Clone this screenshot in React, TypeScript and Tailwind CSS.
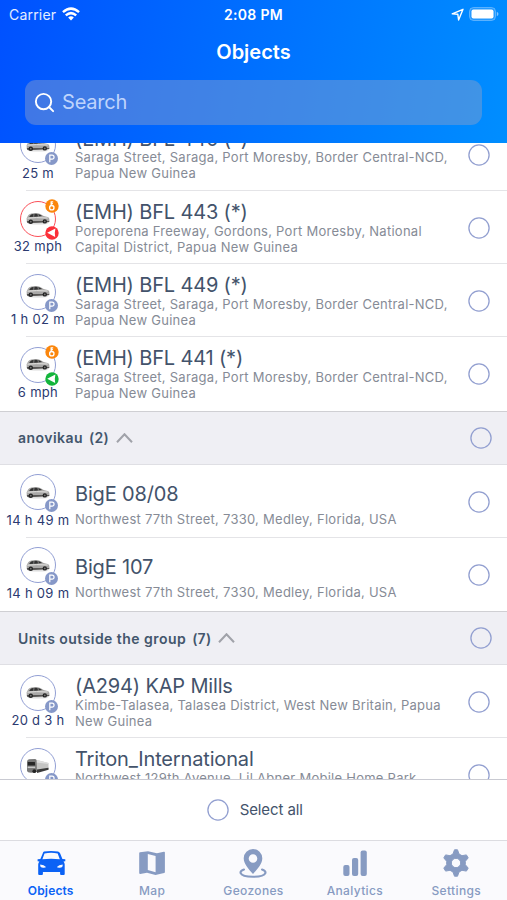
import { Search } from "lucide-react";
import type { ReactNode } from "react";

type Badge = "parked" | "moving" | "speeding";

type Unit = {
    id: number;
    name: string;
    address: string[];
    status: string;
    badge: Badge;
    ignition?: boolean;
    truck?: boolean;
};

type Group = {
    id: number;
    title?: string;
    count?: number;
    units: Unit[];
};

const GROUPS: Group[] = [
    {
        id: 1,
        units: [
            {
                id: 1,
                name: "(EMH) BFL 440 (*)",
                address: ["Saraga Street, Saraga, Port Moresby, Border Central-NCD,", "Papua New Guinea"],
                status: "25 m",
                badge: "parked",
            },
            {
                id: 2,
                name: "(EMH) BFL 443 (*)",
                address: ["Poreporena Freeway, Gordons, Port Moresby, National", "Capital District, Papua New Guinea"],
                status: "32 mph",
                badge: "speeding",
                ignition: true,
            },
            {
                id: 3,
                name: "(EMH) BFL 449 (*)",
                address: ["Saraga Street, Saraga, Port Moresby, Border Central-NCD,", "Papua New Guinea"],
                status: "1 h 02 m",
                badge: "parked",
            },
            {
                id: 4,
                name: "(EMH) BFL 441 (*)",
                address: ["Saraga Street, Saraga, Port Moresby, Border Central-NCD,", "Papua New Guinea"],
                status: "6 mph",
                badge: "moving",
                ignition: true,
            },
        ],
    },
    {
        id: 2,
        title: "anovikau",
        count: 2,
        units: [
            {
                id: 5,
                name: "BigE 08/08",
                address: ["Northwest 77th Street, 7330, Medley, Florida, USA"],
                status: "14 h 49 m",
                badge: "parked",
            },
            {
                id: 6,
                name: "BigE 107",
                address: ["Northwest 77th Street, 7330, Medley, Florida, USA"],
                status: "14 h 09 m",
                badge: "parked",
            },
        ],
    },
    {
        id: 3,
        title: "Units outside the group",
        count: 7,
        units: [
            {
                id: 7,
                name: "(A294) KAP Mills",
                address: ["Kimbe-Talasea, Talasea District, West New Britain, Papua", "New Guinea"],
                status: "20 d 3 h",
                badge: "parked",
            },
            {
                id: 8,
                name: "Triton_International",
                address: ["Northwest 129th Avenue, Lil Abner Mobile Home Park,"],
                status: "",
                badge: "parked",
                truck: true,
            },
        ],
    },
];

function Radio() {
    return (
        <svg className="shrink-0" width="22" height="22" viewBox="0 0 22 22">
            <circle cx="11" cy="11" r="10.1" fill="none" stroke="#929fd0" strokeWidth="1.3" />
        </svg>
    );
}

function CarIcon() {
    return (
        <svg width="24" height="13" viewBox="0 0 24 13">
            <ellipse cx="12" cy="11.8" rx="10.500" ry=".8" fill="#dcdcdc" />
            <path d="M.6 6.200 2.200 3.200Q3 1.900 5.200 1.400L9 1q3.200-.1 5.300 1l3.400 2 4 1q1.500.5 1.600 1.800l.2 2.400q-.1 1-1.400 1.200L3 11.300q-1.900 0-2.200-1.500Z" fill="#a9a8a7" />
            <path d="M3.400 4.500 4.600 3Q5.600 2.200 7.200 2L10 1.800q2 0 3.600.8l2.600 1.500-6.200.7-6.600.3Z" fill="#333" />
            <path d="M8 1.800 7.700 4.800M11.800 1.800l.7 2.600" stroke="#b5b5b5" strokeWidth=".6" />
            <path d="M1.500 6.200q8-1 20.200-.2" stroke="#e4e3e1" strokeWidth="1" fill="none" />
            <path d="M1 8.900h22.200v1.200L3 11.300q-1.800 0-2.100-1.500Z" fill="#565453" />
            <circle cx="4.800" cy="9.700" r="2.200" fill="#222" />
            <circle cx="4.800" cy="9.700" r=".9" fill="#777" />
            <circle cx="18.800" cy="9.400" r="2.200" fill="#222" />
            <circle cx="18.800" cy="9.400" r=".9" fill="#777" />
        </svg>
    );
}

function TruckIcon() {
    return (
        <svg width="24" height="16" viewBox="0 0 24 16">
            <path d="M9 1.500 22.500 5v6.500L11 14Z" fill="#c4c4c3" />
            <path d="M9 1.500 22.500 5l.2 1L10 4.500Z" fill="#dedede" />
            <path d="M11 11.500 22.500 9.800v2L11 15Z" fill="#3a3a3a" />
            <path d="M1 3.500Q1.200 1.500 3 1.300l6-.3q1.400 0 1.600 1.500L11 14l-6 .7q-3.600-.2-4-2Z" fill="#777" />
            <path d="M1.800 4h7l.4 3.600-7.400-.2Z" fill="#262626" />
            <path d="M1.600 8.600h7.600v1.500H1.600Z" fill="#c8c8c8" />
            <circle cx="8.300" cy="13.200" r="1.900" fill="#222" />
        </svg>
    );
}

function StatusBadge({ badge }: { badge: Badge }) {
    if (badge === "parked") {
        return (
            <svg className="absolute top-[24px] left-[24px]" width="13" height="13" viewBox="0 0 13 13">
                <circle cx="6.500" cy="6.500" r="6.500" fill="#8698c8" />
                <path d="M4.800 10.200V3.200h2.300a1.900 1.900 0 0 1 0 3.900H4.800" fill="none" stroke="#fff" strokeWidth="1.200" />
            </svg>
        );
    }
    return (
        <svg className="absolute top-[24px] left-[24px]" width="14" height="14" viewBox="0 0 14 14">
            <circle cx="7" cy="7" r="6.700" fill={badge === "moving" ? "#14b53c" : "#fb2f38"} />
            <path d="M2.200 6.800 10.400 2.600 9.800 7l.4 3.900Z" fill="#fff" />
        </svg>
    );
}

function IgnitionBadge() {
    return (
        <svg className="absolute -top-[3px] left-[24px]" width="14" height="14" viewBox="0 0 14 14">
            <circle cx="7" cy="7" r="6.700" fill="#fb860c" />
            <g fill="none" stroke="#fff" strokeWidth="1.300">
                <path d="M6.200 2.200v4.200M6.200 2.900h2M6.200 4.700h1.700" />
                <circle cx="6.800" cy="8.700" r="2.200" />
            </g>
        </svg>
    );
}

function UnitRow({ unit, last }: { unit: Unit; last: boolean }) {
    // The list is cut right below this row's first address line
    const single = unit.address.length === 1 && !unit.truck;
    return (
        <div className="relative flex h-[73.2px] shrink-0">
            <div className="flex w-[76px] shrink-0 flex-col items-center pt-[9.5px]">
                <div
                    className={`relative flex h-9 w-9 items-center justify-center rounded-full border-[1.5px] bg-white ${unit.badge === "speeding" ? "border-[#fb5058]" : "border-[#929fd4]"
                        }`}
                >
                    {unit.truck ? <TruckIcon /> : <CarIcon />}
                    {unit.ignition && <IgnitionBadge />}
                    <StatusBadge badge={unit.badge} />
                </div>
                <span className="mt-[1.5px] text-[13px] leading-4 tracking-[0.3px] whitespace-nowrap text-[#2b3a70]">
                    {unit.status}
                </span>
            </div>
            <div className={`min-w-0 flex-1 whitespace-nowrap ${single ? "pt-[17px]" : "pt-[9px]"}`}>
                <div className="-ml-px text-[20px] leading-6 tracking-[-0.16px] text-[#43536b]">{unit.name}</div>
                <div className={`-ml-px text-[13px] leading-4 tracking-[0.26px] text-[#868b96] ${single ? "mt-[5.5px]" : "-mt-[1.5px]"}`}>
                    {unit.address.map((line) => (
                        <div key={line}>{line}</div>
                    ))}
                </div>
            </div>
            <div className="flex items-center pt-[0.5px] pr-[17.5px]">
                <Radio />
            </div>
            {!last && <div className="absolute right-0 bottom-0 left-[26px] h-px bg-[#e4e4e7]" />}
        </div>
    );
}

function GroupHeader({ title, count }: { title: string; count?: number }) {
    return (
        <div className="flex h-[54px] shrink-0 items-center border-y border-t-[#cfcfd3] border-b-[#dfdfe4] bg-[#efeff4] pr-[15px] pl-[18px]">
            <span className="flex gap-[6px] text-[14px] font-semibold tracking-[0.46px] text-[#43566c]">
                <span>{title}</span>
                <span className="tracking-[0.2px]">({count})</span>
            </span>
            <svg className="ml-[7px]" width="17" height="10" viewBox="0 0 17 10">
                <path d="M1 9.200 8.500 1.200 16 9.200" fill="none" stroke="#a0a2a9" strokeWidth="2" />
            </svg>
            <div className="ml-auto">
                <Radio />
            </div>
        </div>
    );
}

function StatusBar() {
    return (
        <div className="grid h-7 grid-cols-3 items-center px-[9px] text-[14px]">
            <div className="flex items-center gap-[6px]">
                <span className="tracking-[0.2px] text-white/90">Carrier</span>
                <svg width="18" height="14" viewBox="0 0 19 14" fill="none" stroke="#fff" strokeWidth="2.600">
                    <path d="M1 5q8.500-7.300 17 0" />
                    <path d="M4 8.400q5.500-4.600 11 0" />
                    <path d="M6.500 10.700q3-2.400 6 0L9.500 13.800Z" fill="#fff" stroke="none" />
                </svg>
            </div>
            <span className="text-center font-semibold tracking-[0.3px]">2:08 PM</span>
            <div className="-mr-[1px] flex items-center justify-end gap-[5px]">
                <svg width="13" height="13" viewBox="0 0 13 13">
                    <path d="M1.200 5.800 12 1.300 7.600 12 6.800 6.200Z" fill="none" stroke="#fff" strokeWidth="1.400" strokeLinejoin="round" />
                </svg>
                <svg width="30" height="14" viewBox="0 0 30 14">
                    <rect x=".5" y=".5" width="26" height="13" rx="4" fill="#fff" fillOpacity=".15" stroke="#fff" strokeOpacity=".3" />
                    <rect x="2.500" y="2.500" width="22" height="9" rx="2" fill="#fff" />
                    <path d="M27.800 4.700q1.700.8 1.700 2.300t-1.700 2.300Z" fill="#fff" fillOpacity=".5" />
                </svg>
            </div>
        </div>
    );
}

function Tab({ label, active, children }: { label: string; active?: boolean; children: ReactNode }) {
    return (
        <div className={`flex flex-col items-center pt-[7px] ${active ? "text-[#0b62f5]" : "text-[#879bc2]"}`}>
            <svg width="32" height="32" viewBox="0 0 32 32" fill="currentColor">
                {children}
            </svg>
            <span className={`mt-[3px] text-[12px] leading-4 ${active ? "font-semibold tracking-[0.15px]" : "font-medium tracking-[0.35px]"}`}>
                {label}
            </span>
        </div>
    );
}

export default function App() {
    return (
        <div className="flex h-[900px] w-[507px] flex-col overflow-hidden bg-white font-['Inter','Liberation_Sans',sans-serif]">
            <header className="h-[142.5px] shrink-0 bg-[linear-gradient(100deg,#0051ff_0%,#0070ff_50%,#008eff_100%)] text-white">
                <StatusBar />
                <h1 className="pt-[10px] text-center text-[20px] leading-7 font-semibold">Objects</h1>
                <div className="mx-[25px] mt-[14px] flex h-[44.5px] items-center rounded-[11px] bg-[#8f9fc8]/45 pl-[8px]">
                    <Search className="h-[23px] w-[23px]" strokeWidth={2} />
                    <span className="ml-[6px] text-[20px] tracking-[-0.2px] text-[#bed4fc]">Search</span>
                </div>
            </header>

            {/* Objects list, scrolled part of a row down */}
            <main className="min-h-0 flex-1 overflow-hidden">
                <div className="-mt-[24.6px] flex flex-col">
                    {GROUPS.map((group) => (
                        <section key={group.id} className="flex flex-col">
                            {group.title && <GroupHeader title={group.title} count={group.count} />}
                            {group.units.map((unit, i) => (
                                <UnitRow key={unit.id} unit={unit} last={i === group.units.length - 1} />
                            ))}
                        </section>
                    ))}
                </div>
            </main>

            <div className="flex h-[61px] shrink-0 items-center justify-center border-t border-[#c9cad2] pl-[3px]">
                <Radio />
                <span className="ml-[10.5px] text-[15px] tracking-[-0.1px] text-[#43536b]">Select all</span>
            </div>

            {/* Bottom tabs */}
            <nav className="grid h-[60px] shrink-0 grid-cols-5 border-t border-[#dcdce1] bg-[#fafafd]">
                <Tab label="Objects" active>
                    <path fillRule="evenodd" d="M9 3.600Q16 2.200 23 3.600 24.500 4 25.200 5.600L27.400 11l2.900.2v2l-1.800.3q1.200 1.300 1.200 3V26q0 1-1 1h-2.600q-1 0-1-1v-1.900H7.900V26q0 1-1 1H4.200q-1 0-1-1v-9.500q0-1.700 1.200-3l-1.800-.3v-2L5.400 11l2.300-5.400Q8 4 9 3.600ZM9.500 5.400 7.400 11.300q8.700-1.200 17.400 0L22.700 5.400q-6.600-1.200-13.200 0ZM5.200 16.500q-.3 3.200 3 3.200 2.500.1 2.800-.6-2-2.600-5.800-2.600Zm22.500 0q-3.800 0-5.800 2.600.3.700 2.800.6 3.300 0 3-3.200Z" />
                </Tab>
                <Tab label="Map">
                    <path fillRule="evenodd" d="M4 4.200Q3.200 4.300 3.200 5.200V25q0 1 1 1l6.800-1.200 8.500 2.100 8.600-2q.8-.2.800-1V4.500q0-1-1-.8l-7 1.500L12 3.200ZM11.800 5.900l7.800 2v16.300l-7.800-2.100Z" />
                </Tab>
                <Tab label="Geozones">
                    <path fillRule="evenodd" d="M16 1a9.300 9.300 0 0 1 9.300 9.300C25.300 16 20 21.500 16 26 12 21.500 6.700 16 6.700 10.300A9.300 9.300 0 0 1 16 1Zm0 5.200a4.300 4.300 0 1 0 0 8.600 4.300 4.300 0 0 0 0-8.600Z" />
                    <path d="M7 21.500Q3 23 3.600 25.200q1.500 3.600 12.400 3.600t12.400-3.600q.6-2.200-3.400-3.700" fill="none" stroke="currentColor" strokeWidth="2.100" strokeLinecap="round" />
                </Tab>
                <Tab label="Analytics">
                    <rect x="4.300" y="17" width="6.200" height="11" rx="2" />
                    <rect x="13" y="10" width="6.200" height="18" rx="2" />
                    <rect x="21.600" y="2.500" width="6.200" height="25.500" rx="2" />
                </Tab>
                <Tab label="Settings">
                    <path
                        fillRule="evenodd"
                        stroke="currentColor"
                        strokeWidth="1"
                        strokeLinejoin="round"
                        d="M14.500 1.800h3l1.500 4.200 3 1.700 4.400-.8 1.800 3L25.300 13.300v3.400l2.900 3.400-1.800 3-4.400-.8-3 1.700-1.500 4.200h-3L13 24l-3-1.700-4.400.8-1.800-3 2.900-3.400v-3.400L3.800 9.900l1.800-3 4.400.8 3-1.700ZM16 10.300a4.700 4.700 0 1 0 0 9.400 4.700 4.700 0 0 0 0-9.400Z"
                    />
                </Tab>
            </nav>
        </div>
    );
}
